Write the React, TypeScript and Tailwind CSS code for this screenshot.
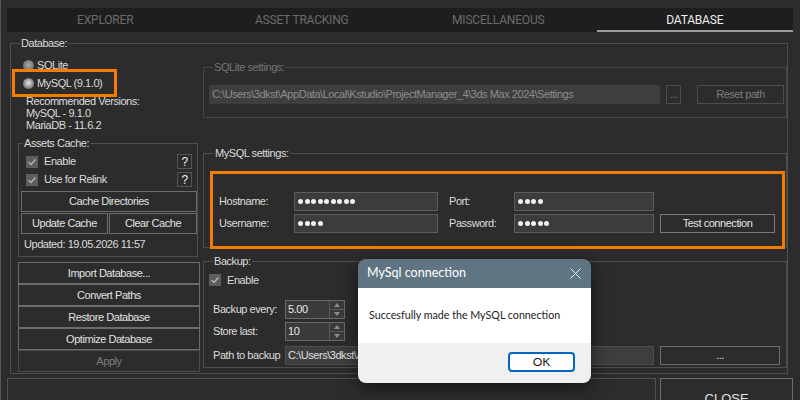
import React from 'react';

const FONT = "font-['Liberation_Sans',Arial,sans-serif]";

const Legend: React.FC<{ children: React.ReactNode; dim?: boolean; className?: string }> = ({ children, dim, className }) => (
  <legend className={`px-[1px] leading-[13px] ${dim ? 'text-[#747474]' : 'text-[#dcdcdc]'} ${className ?? 'ml-[4px]'}`}>
    {children}
  </legend>
);

const Radio: React.FC<{ checked?: boolean }> = ({ checked }) => (
  <span
    className={`w-[11px] h-[11px] rounded-full shrink-0 ${
      checked
        ? 'bg-[radial-gradient(circle_at_50%_45%,#e6e6e6_0%,#b0b0b0_35%,#6f6f6f_75%,#5a5a5a_100%)]'
        : 'bg-[radial-gradient(circle_at_50%_45%,#a8a8a8_0%,#8a8a8a_40%,#666_80%,#555_100%)]'
    }`}
  />
);

const Check: React.FC = () => (
  <span className="w-[12px] h-[12px] bg-[#5e5e5e] shrink-0 flex items-center justify-center">
    <svg width="10" height="10" viewBox="0 0 10 10">
      <path d="M1.5 5 L4 7.5 L8.5 2.5" fill="none" stroke="#b4b4b4" strokeWidth="1.4" />
    </svg>
  </span>
);

const Btn: React.FC<{ children: React.ReactNode; className?: string; dim?: boolean }> = ({ children, className, dim }) => (
  <div
    className={`flex items-center justify-center border ${
      dim ? 'border-[#4c4c4c] text-[#7c7c7c]' : 'border-[#6c6c6c] text-[#e2e2e2]'
    } ${className ?? ''}`}
  >
    {children}
  </div>
);

const Dots: React.FC<{ n: number }> = ({ n }) => (
  <div className="flex items-center gap-[1.5px] pl-[3px]">
    {Array.from({ length: n }).map((_, i) => (
      <span key={i} className="w-[5px] h-[5px] rounded-full bg-[#f2f2f2]" />
    ))}
  </div>
);

const Field: React.FC<{ className?: string; children?: React.ReactNode }> = ({ className, children }) => (
  <div className={`h-[19px] bg-[#3c3c3c] border border-[#5c5c5c] flex items-center overflow-hidden ${className ?? ''}`}>
    {children}
  </div>
);

const Spin: React.FC<{ value: string }> = ({ value }) => (
  <div className="w-[60px] h-[19px] bg-[#3a3a3a] border border-[#6a6a6a] flex">
    <div className="flex-1 flex items-center pl-[2px] text-[#e8e8e8]">{value}</div>
    <div className="w-[15px] flex flex-col border-l border-[#5a5a5a]">
      <div className="flex-1 flex items-center justify-center border-b border-[#5a5a5a]">
        <svg width="6" height="4" viewBox="0 0 6 4"><path d="M0 4 L3 0 L6 4 Z" fill="#8e8e8e" /></svg>
      </div>
      <div className="flex-1 flex items-center justify-center">
        <svg width="6" height="4" viewBox="0 0 6 4"><path d="M0 0 L3 4 L6 0 Z" fill="#8e8e8e" /></svg>
      </div>
    </div>
  </div>
);

const tabs = ['EXPLORER', 'ASSET TRACKING', 'MISCELLANEOUS', 'DATABASE'];

export default function App() {
  return (
    <div className={`relative w-[800px] h-[400px] overflow-hidden bg-[#2c2c2c] border-l border-[#555] ${FONT} text-[11px] tracking-[-0.45px] text-[#dcdcdc]`}>
      <div className="pt-[8px] pl-[6px] pr-[7px] flex flex-col">
        {/* tabs */}
        <div className="h-[24px] bg-[#1e1e1e] grid grid-cols-4">
          {tabs.map((t) => {
            const active = t === 'DATABASE';
            return (
              <div
                key={t}
                className={`flex items-center justify-center font-['Roboto',sans-serif] text-[12px] tracking-[-0.2px] ${
                  active ? 'text-[#ececec] border-b-2 border-[#9c9c9c] pt-[2px]' : 'text-[#6c6c6c]'
                }`}
              >
                {t}
              </div>
            );
          })}
        </div>

        {/* database group */}
        <fieldset className="mt-[5px] ml-[3px] mr-[5px] h-[337px] border border-[#4e4e4e] pl-[6px]">
          <Legend className="ml-[3px]">Database:</Legend>
          <div className="flex gap-[4px]">
            {/* left column */}
            <div className="w-[182px] flex flex-col">
              <div className="mt-[8px] h-[14px] flex items-center gap-[3px] pl-[6px]">
                <Radio />
                <span>SQLite</span>
              </div>
              <div className="-mt-[3px] -ml-[5px] w-[105px] h-[28px] border-[3px] border-[#f57c00] flex items-center gap-[3px] pl-[8px]">
                <Radio checked />
                <span>MySQL (9.1.0)</span>
              </div>
              <div className="-mt-[2px] pl-[9px] leading-[12px]">
                <div>Recommended Versions:</div>
                <div>MySQL - 9.1.0</div>
                <div>MariaDB - 11.6.2</div>
              </div>

              <fieldset className="mt-[6px] ml-[1px] w-[180px] border border-[#4e4e4e] pl-[2px] pb-[5px]">
                <Legend className="ml-[2px]">Assets Cache:</Legend>
                <div className="mt-[4px] h-[15px] flex items-center pl-[5px] pr-[5px]">
                  <Check />
                  <span className="ml-[6px] flex-1">Enable</span>
                  <span className="w-[15px] h-[15px] border border-[#555] flex items-center justify-center text-[12px] text-[#eee]">?</span>
                </div>
                <div className="mt-[3px] h-[15px] flex items-center pl-[5px] pr-[5px]">
                  <Check />
                  <span className="ml-[6px] flex-1">Use for Relink</span>
                  <span className="w-[15px] h-[15px] border border-[#555] flex items-center justify-center text-[12px] text-[#eee]">?</span>
                </div>
                <Btn className="mt-[4px] h-[21px] w-[176px]">Cache Directories</Btn>
                <div className="mt-[1px] flex gap-[1px] w-[176px]">
                  <Btn className="h-[21px] w-[87px]">Update Cache</Btn>
                  <Btn className="h-[21px] w-[88px]">Clear Cache</Btn>
                </div>
                <div className="mt-[4px] ml-[3px] leading-[13px]">Updated: 19.05.2026 11:57</div>
              </fieldset>

              <div className="mt-[5px] ml-[1px] w-[182px] flex flex-col">
                <Btn className="h-[22px]">Import Database...</Btn>
                <Btn className="h-[22px]">Convert Paths</Btn>
                <Btn className="h-[22px]">Restore Database</Btn>
                <Btn className="h-[22px]">Optimize Database</Btn>
                <Btn className="h-[22px]" dim>Apply</Btn>
              </div>
            </div>

            {/* right column */}
            <div className="w-[584px] flex flex-col">
              <fieldset className="mt-[11px] border border-[#464646] pl-[5px] pb-[13px]">
                <Legend dim className="ml-[4px]">SQLite settings:</Legend>
                <div className="mt-[11px] flex items-center">
                  <div className="w-[451px] h-[19px] bg-[#3e3e3e] flex items-center pl-[3px] text-[#8c8c8c] whitespace-nowrap overflow-hidden">
                    C:\Users\3dkst\AppData\Local\Kstudio\ProjectManager_4\3ds Max 2024\Settings
                  </div>
                  <Btn dim className="ml-[6px] w-[15px] h-[19px]">...</Btn>
                  <Btn dim className="ml-[16px] w-[87px] h-[19px]">Reset path</Btn>
                </div>
              </fieldset>

              <fieldset className="mt-[29px] border border-[#4e4e4e] pl-[6px] pr-[1px]">
                <Legend className="ml-[4px]">MySQL settings:</Legend>
                <div className="relative mt-[11px] -mb-[2px] h-[78px] border-[3px] border-[#f57c00] pl-[6px] pt-[18px]">
                  <div className="flex items-center h-[19px]">
                    <span className="w-[75px]">Hostname:</span>
                    <Field className="w-[144px]"><Dots n={9} /></Field>
                    <span className="ml-[11px] w-[65px]">Port:</span>
                    <Field className="w-[140px]"><Dots n={4} /></Field>
                  </div>
                  <div className="mt-[3px] flex items-center h-[19px]">
                    <span className="w-[75px]">Username:</span>
                    <Field className="w-[144px]"><Dots n={4} /></Field>
                    <span className="ml-[11px] w-[65px]">Password:</span>
                    <Field className="w-[140px]"><Dots n={5} /></Field>
                    <Btn className="ml-[6px] w-[115px] h-[19px] border-[#7a7a7a]">Test connection</Btn>
                  </div>
                </div>
              </fieldset>

              <fieldset className="mt-[7px] border border-[#4e4e4e] pl-[5px] pb-[2px]">
                <Legend className="ml-[4px]">Backup:</Legend>
                <div className="mt-[5px] h-[14px] flex items-center">
                  <Check />
                  <span className="ml-[6px]">Enable</span>
                </div>
                <div className="mt-[13px] flex items-center pl-[4px]">
                  <span className="w-[72px]">Backup every:</span>
                  <Spin value="5.00" />
                </div>
                <div className="mt-[3px] flex items-center pl-[4px]">
                  <span className="w-[72px]">Store last:</span>
                  <Spin value="10" />
                </div>
                <div className="mt-[5px] flex items-center pl-[4px]">
                  <span className="w-[72px] whitespace-nowrap">Path to backup</span>
                  <div className="w-[369px] h-[19px] bg-[#3e3e3e] border border-[#4e4e4e] flex items-center pl-[2px] text-[#e0e0e0] whitespace-nowrap overflow-hidden">
                    C:\Users\3dkst\AppData\Local\Kstudio\ProjectManager_4\Backup
                  </div>
                  <Btn className="ml-[6px] w-[120px] h-[19px]">...</Btn>
                </div>
              </fieldset>
            </div>
          </div>
        </fieldset>

        {/* bottom bar */}
        <div className="mt-[4px] flex gap-[4px]">
          <div className="w-[650px] h-[40px] border border-[#505050]" />
          <Btn className="w-[133px] h-[40px] text-[13px] tracking-normal items-start pt-[10px]">CLOSE</Btn>
        </div>
      </div>

      {/* message box */}
      <div className="absolute left-[357px] top-[259px] w-[233px] h-[124px] rounded-[8px] shadow-[0_4px_18px_rgba(0,0,0,0.55)] overflow-hidden flex flex-col font-['Lato',sans-serif] tracking-normal">
        <div className="h-[29px] bg-[#5f7682] flex items-center pl-[9px] pr-[10px] text-white text-[12.5px]">
          <span className="flex-1">MySql connection</span>
          <svg width="11" height="11" viewBox="0 0 11 11">
            <path d="M0.5 0.5 L10.5 10.5 M10.5 0.5 L0.5 10.5" stroke="#e8eef1" strokeWidth="1" />
          </svg>
        </div>
        <div className="h-[55px] bg-white flex items-center pl-[11px] text-[#1b1b1b] text-[10.7px]">
          Succesfully made the MySQL connection
        </div>
        <div className="flex-1 bg-[#f0f0f0] flex items-start justify-end pt-[9px] pr-[16px]">
          <div className="w-[67px] h-[20px] rounded-[4px] bg-[#fdfdfd] border-2 border-[#0067c0] flex items-center justify-center text-[#1b1b1b] text-[12px]">
            OK
          </div>
        </div>
      </div>
    </div>
  );
}
